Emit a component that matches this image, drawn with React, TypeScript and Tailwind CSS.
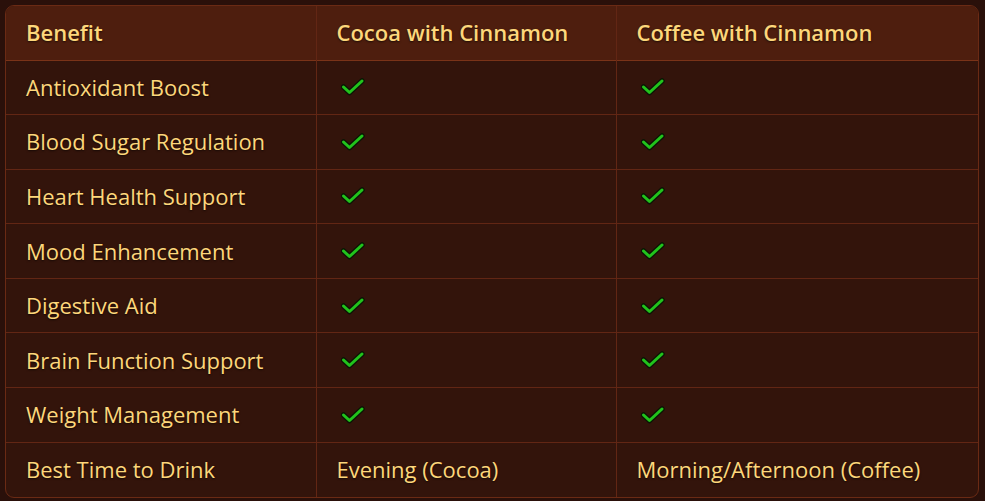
const rows: { label: string; cocoa: string | null; coffee: string | null }[] = [
  { label: "Antioxidant Boost", cocoa: null, coffee: null },
  { label: "Blood Sugar Regulation", cocoa: null, coffee: null },
  { label: "Heart Health Support", cocoa: null, coffee: null },
  { label: "Mood Enhancement", cocoa: null, coffee: null },
  { label: "Digestive Aid", cocoa: null, coffee: null },
  { label: "Brain Function Support", cocoa: null, coffee: null },
  { label: "Weight Management", cocoa: null, coffee: null },
  { label: "Best Time to Drink", cocoa: "Evening (Cocoa)", coffee: "Morning/Afternoon (Coffee)" },
];

function Check() {
  return (
    <svg width="24" height="18" viewBox="0 0 24 18" className="ml-[4px]">
      <polyline points="2.5,9 8.5,14.5 21,3" fill="none" stroke="#0b1604" strokeWidth="5.5" strokeLinecap="round" strokeLinejoin="round" />
      <polyline points="2.5,9 8.5,14.5 21,3" fill="none" stroke="#22c31c" strokeWidth="3" strokeLinecap="round" strokeLinejoin="round" />
    </svg>
  );
}

// null means the benefit applies -> green tick
function Cell({ value }: { value: string | null }) {
  return (
    <td className="h-[54.6px] px-[20px] align-middle border-l border-[#622614]">
      {value === null ? <Check /> : value}
    </td>
  );
}

export default function App() {
  return (
    <div
      className="w-[985px] h-[501px] bg-[#2a100a] p-[5px] pr-[6px]"
      style={{ fontFamily: '"Open Sans", "Noto Sans", sans-serif' }}
    >
      <div className="rounded-[9px] border border-[#6a2a14] overflow-hidden bg-[#33140b]">
        <table className="w-full border-collapse text-[22px] font-medium text-[#fdd77b] [text-shadow:0_1px_2px_rgba(0,0,0,0.6)]">
          <colgroup>
            <col className="w-[310px]" />
            <col className="w-[300px]" />
            <col />
          </colgroup>
          <thead>
            <tr className="bg-[#4e1e0e] border-b border-[#7a3318]">
              <th className="h-[54px] px-[20px] text-left font-semibold">Benefit</th>
              <th className="h-[54px] px-[20px] text-left font-semibold border-l border-[#622614]">Cocoa with Cinnamon</th>
              <th className="h-[54px] px-[20px] text-left font-semibold border-l border-[#622614]">Coffee with Cinnamon</th>
            </tr>
          </thead>
          <tbody>
            {rows.map((r, i) => (
              <tr key={r.label} className={i < rows.length - 1 ? "border-b border-[#622614]" : ""}>
                <td className="h-[54.6px] px-[20px] align-middle">{r.label}</td>
                <Cell value={r.cocoa} />
                <Cell value={r.coffee} />
              </tr>
            ))}
          </tbody>
        </table>
      </div>
    </div>
  );
}
